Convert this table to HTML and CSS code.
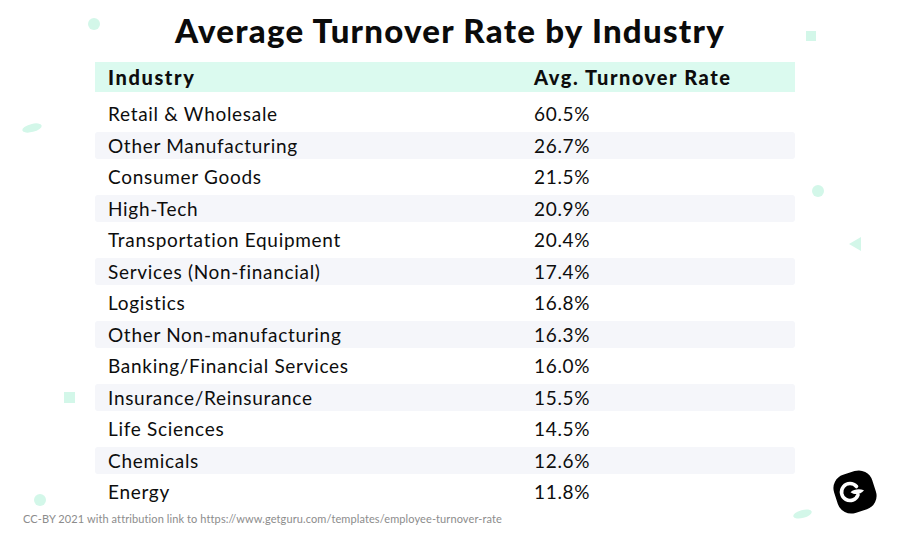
FILE: index.html
```html
<!DOCTYPE html>
<html lang="en">
<head>
<meta charset="utf-8">
<title>Average Turnover Rate by Industry</title>
<link rel="stylesheet" href="styles.css">
</head>
<body>
<main class="page">
  <h1 class="title">Average Turnover Rate by Industry</h1>
  <div class="table">
    <div class="row head"><span>Industry</span><span>Avg. Turnover Rate</span></div>
    <div class="body">
      <div class="row"><span>Retail &amp; Wholesale</span><span>60.5%</span></div>
      <div class="row alt"><span>Other Manufacturing</span><span>26.7%</span></div>
      <div class="row"><span>Consumer Goods</span><span>21.5%</span></div>
      <div class="row alt"><span>High-Tech</span><span>20.9%</span></div>
      <div class="row"><span>Transportation Equipment</span><span>20.4%</span></div>
      <div class="row alt"><span>Services (Non-financial)</span><span>17.4%</span></div>
      <div class="row"><span>Logistics</span><span>16.8%</span></div>
      <div class="row alt"><span>Other Non-manufacturing</span><span>16.3%</span></div>
      <div class="row"><span>Banking/Financial Services</span><span>16.0%</span></div>
      <div class="row alt"><span>Insurance/Reinsurance</span><span>15.5%</span></div>
      <div class="row"><span>Life Sciences</span><span>14.5%</span></div>
      <div class="row alt"><span>Chemicals</span><span>12.6%</span></div>
      <div class="row"><span>Energy</span><span>11.8%</span></div>
    </div>
  </div>
  <p class="credit">CC-BY 2021 with attribution link to https://www.getguru.com/templates/employee-turnover-rate</p>

  <div class="logo">
    <svg width="46" height="46" viewBox="0 0 46 46">
      <rect x="3" y="3" width="40" height="40" rx="14" fill="#000" transform="rotate(-18 23 23)"/>
      <path d="M24.5 17.5 A8.5 8.5 0 1 0 26 25.9" fill="none" stroke="#fff" stroke-width="3.6" stroke-linecap="round"/>
      <path d="M18.5 23.2 C22 20.2 27 19.6 32 21.2 C28.5 25.8 22.5 26.2 18.5 23.2 Z" fill="#fff"/>
    </svg>
  </div>

  <span class="conf c1"></span>
  <span class="conf c2"></span>
  <span class="conf c3"></span>
  <span class="conf c4"></span>
  <span class="conf c5"></span>
  <span class="conf c6"></span>
  <span class="conf c7"></span>
  <span class="conf c8"></span>
</main>
</body>
</html>
```
FILE: styles.css
```css
html, body {
  margin: 0;
  padding: 0;
  background: #ffffff;
}

.page {
  position: relative;
  width: 900px;
  height: 540px;
  overflow: hidden;
  font-family: "Lato", "Open Sans", sans-serif;
  color: #0d0d0d;
}

.title {
  margin: 0;
  padding-top: 10px;
  height: 62px;
  box-sizing: border-box;
  text-align: center;
  font-size: 33px;
  line-height: 40px;
  font-weight: 900;
  color: #0b0b0b;
  letter-spacing: 1.25px;
}

.table {
  width: 700px;
  margin-left: 95px;
}

.row {
  display: grid;
  grid-template-columns: 426px 1fr;
  align-items: center;
  height: 27px;
  padding-left: 13px;
  font-size: 19px;
  letter-spacing: 0.7px;
  border-radius: 3px;
}

.row.head {
  height: 30px;
  background: #dbfaef;
  font-size: 20px;
  font-weight: 900;
  letter-spacing: 1.6px;
  border-radius: 0;
}

.body {
  display: flex;
  flex-direction: column;
  gap: 4.5px;
  margin-top: 8px;
}

.row.alt {
  background: #f5f6fa;
}

.credit {
  margin: 7px 0 0 23px;
  font-size: 11px;
  line-height: 14px;
  letter-spacing: 0.1px;
  color: #8c8c8c;
}

.logo {
  position: absolute;
  left: 832px;
  top: 469px;
  width: 46px;
  height: 46px;
}

.logo svg {
  display: block;
}

.conf {
  position: absolute;
  background: #d3f7e9;
}

.c1 { left: 88px; top: 18px; width: 12px; height: 12px; border-radius: 50%; }
.c2 { left: 22px; top: 124px; width: 20px; height: 8px; border-radius: 50%; transform: rotate(-15deg); }
.c3 { left: 806px; top: 31px; width: 10px; height: 10px; }
.c4 { left: 812px; top: 185px; width: 12px; height: 12px; border-radius: 50%; }
.c5 { left: 849px; top: 237px; width: 0; height: 0; background: none; border-top: 7px solid transparent; border-bottom: 7px solid transparent; border-right: 12px solid #d3f7e9; }
.c6 { left: 64px; top: 392px; width: 11px; height: 11px; }
.c7 { left: 34px; top: 494px; width: 12px; height: 12px; border-radius: 50%; }
.c8 { left: 793px; top: 510px; width: 19px; height: 8px; border-radius: 50%; transform: rotate(-15deg); }
```
